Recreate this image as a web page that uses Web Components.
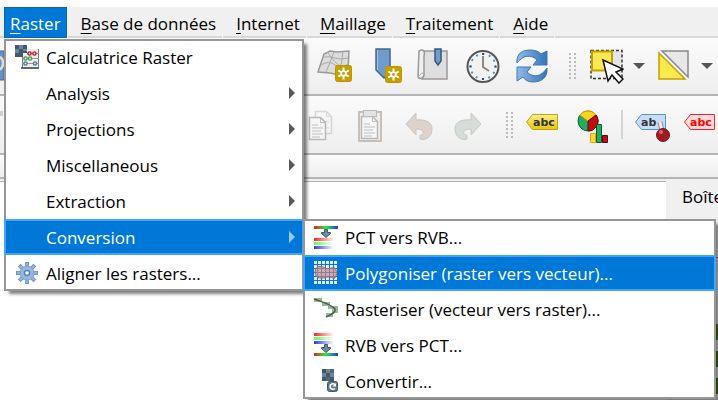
<!DOCTYPE html>
<html lang="fr">
<head>
<meta charset="utf-8">
<title>Raster</title>
<style>
    html, body {
        height: 100%;
        margin: 0;
    }
    body {
        overflow: hidden;
        background: #ffffff;
        color: #000000;
        font: 17px/24px "Open Sans", "Noto Sans", sans-serif;
    }
    u {
        text-decoration-thickness: 1px;
        text-underline-offset: 3px;
    }
</style>
</head>
<body>
<gis-window>
    <menu-bar slot="menu">
        <menu-entry active>
            <u>R</u>aster
            <popup-menu slot="popup">
                <menu-item icon="calculator">Calculatrice Raster</menu-item>
                <menu-item more>Analysis</menu-item>
                <menu-item more>Projections</menu-item>
                <menu-item more>Miscellaneous</menu-item>
                <menu-item more>Extraction</menu-item>
                <menu-item more active>
                    Conversion
                    <popup-menu slot="submenu" wide>
                        <menu-item icon="pct">PCT vers RVB...</menu-item>
                        <menu-item icon="polygonize" active>Polygoniser (raster vers vecteur)...</menu-item>
                        <menu-item icon="rasterize">Rasteriser (vecteur vers raster)...</menu-item>
                        <menu-item icon="rgb">RVB vers PCT...</menu-item>
                        <menu-item icon="convert">Convertir...</menu-item>
                    </popup-menu>
                </menu-item>
                <menu-item icon="gear">Aligner les rasters...</menu-item>
            </popup-menu>
        </menu-entry>
        <menu-entry><u>B</u>ase de données</menu-entry>
        <menu-entry><u>I</u>nternet</menu-entry>
        <menu-entry><u>M</u>aillage</menu-entry>
        <menu-entry><u>T</u>raitement</menu-entry>
        <menu-entry><u>A</u>ide</menu-entry>
    </menu-bar>

    <tool-bar slot="tools">
        <tool-group lead>
            <tool-button icon="zoomlayer" label="Zoom sur la couche"></tool-button>
        </tool-group>
        <tool-group>
            <tool-button icon="mesh" label="Nouvelle vue 3D"></tool-button>
            <tool-button icon="bookmark" label="Nouveau signet"></tool-button>
            <tool-button icon="map" label="Signets"></tool-button>
            <tool-button icon="clock" label="Contrôleur temporel"></tool-button>
            <tool-button icon="refresh" label="Actualiser"></tool-button>
        </tool-group>
        <tool-handle></tool-handle>
        <tool-group snug>
            <tool-button icon="select" label="Sélectionner" drop></tool-button>
            <tool-button icon="deselect" label="Désélectionner" drop></tool-button>
        </tool-group>
    </tool-bar>

    <tool-bar slot="tools" class="edit">
        <tool-group lead>
            <tool-button icon="stub" label="Enregistrer"></tool-button>
        </tool-group>
        <tool-group>
            <tool-button icon="copy" label="Copier"></tool-button>
            <tool-button icon="paste" label="Coller"></tool-button>
            <tool-button icon="undo" label="Annuler"></tool-button>
            <tool-button icon="redo" label="Rétablir"></tool-button>
        </tool-group>
        <tool-handle></tool-handle>
        <tool-group>
            <tool-button icon="label" label="Étiquettes"></tool-button>
            <tool-button icon="diagram" label="Diagrammes"></tool-button>
        </tool-group>
        <tool-handle line></tool-handle>
        <tool-group>
            <tool-button icon="pin" label="Épingler"></tool-button>
            <tool-button icon="labelred" label="Étiquettes non placées"></tool-button>
        </tool-group>
    </tool-bar>

    <tool-bar slot="tools" slim></tool-bar>

    <map-canvas></map-canvas>
    <dock-panel slot="dock">Boîte</dock-panel>
</gis-window>

<script>
const SPARK = `
    <rect x="0.5" y="0.5" width="16" height="16" rx="2" fill="#c4a000" stroke="#b89500"/>
    <path d="M8.500 2.500v12M3.300 5.500l10.400 6M3.300 11.500l10.400-6" stroke="#fff" stroke-width="2"/>
    <circle cx="8.500" cy="8.500" r="3.200" fill="#fff"/><circle cx="8.500" cy="8.500" r="1.400" fill="#c4a000"/>`;

const RAMPS = `
    <defs>
        <linearGradient id="all"><stop offset="0" stop-color="#e22"/><stop offset=".5" stop-color="#2e3"/><stop offset="1" stop-color="#23e"/></linearGradient>
        <linearGradient id="r"><stop offset="0" stop-color="#f22"/><stop offset="1" stop-color="#fff"/></linearGradient>
        <linearGradient id="g"><stop offset="0" stop-color="#5f5"/><stop offset="1" stop-color="#fff"/></linearGradient>
        <linearGradient id="b"><stop offset="0" stop-color="#33e"/><stop offset="1" stop-color="#fff"/></linearGradient>
    </defs>`;

const CHECKER = `
    <rect width="12" height="12" fill="#415a6b"/>
    <path d="M4 0h4v4H4zM0 4h4v4H0zM8 4h4v4H8z" fill="#6b8799"/>
    <path d="M8 0h4v4H8zM4 8h4v4H4z" fill="#52697a"/>`;

const PAGE = `
    <path d="M.5.500h11l5 5v17H.5z" fill="#f6f6f6" stroke="#b8b8b8" stroke-width="1.500"/>
    <path d="M11.500.500v5h5M3 8h6M3 11h11M3 14h9M3 17h11M3 20h8" fill="none" stroke="#bdbdbd"/>`;

// menu icons are drawn on a 24 grid, toolbar icons on a 36 grid
const ICONS = {
    calculator: `${CHECKER}
        <rect x="7" y="4" width="17" height="19" fill="#eee"/>
        <path d="M0 0h12v8H8v4H0z" fill="#415a6b"/>
        <path d="M4 0h4v4H4zM0 4h4v4H0zM8 4h4v2H8z" fill="#6b8799"/>
        <path d="M7.500 12v12M23.500 4v20" stroke="#777"/>
        <path d="M12 8.500h12M7 13.500h17M7 18.500h17" stroke="#999"/>
        <path d="M6 23h18" stroke="#666" stroke-width="2"/>
        <g fill="#eee" stroke-width="1.400">
            <g stroke="#c01020"><circle cx="14.500" cy="8.500" r="1.600"/><circle cx="19.500" cy="8.500" r="1.600"/></g>
            <g stroke="#4a9a4a"><circle cx="10.500" cy="13.500" r="1.600"/><circle cx="15" cy="13.500" r="1.600"/></g>
            <g stroke="#4d7599"><circle cx="10.500" cy="18.500" r="1.600"/><circle cx="20" cy="18.500" r="1.600"/></g>
        </g>`,
    gear: `
        <path d="M12 1v22M1 12h22M4.200 4.200l15.600 15.600M4.200 19.800L19.800 4.200" stroke="#6b94c8" stroke-width="4"/>
        <path d="M12 2v20M2 12h20M5 5l14 14M5 19L19 5" stroke="#98b5dc" stroke-width="2.400"/>
        <circle cx="12" cy="12" r="7" fill="#98b5dc" stroke="#7fa2d0"/>
        <circle cx="12" cy="12" r="2.500" fill="#fff" stroke="#5583bb" stroke-width="1.500"/>`,
    pct: `${RAMPS}
        <rect y="1" width="24" height="3" fill="url(#all)"/>
        <rect y="13" width="20" height="3" fill="url(#r)"/><rect y="17" width="20" height="3" fill="url(#g)"/><rect y="21" width="20" height="3" fill="url(#b)"/>
        <path d="M10.500 4.500h3v3h3v1L12 12.500 7.500 8.500v-1h3z" fill="#6d8ca1" stroke="#3f5666"/>`,
    rgb: `${RAMPS}
        <rect width="20" height="3" fill="url(#r)"/><rect y="4" width="20" height="3" fill="url(#g)"/><rect y="8" width="20" height="3" fill="url(#b)"/>
        <rect y="20" width="24" height="3" fill="url(#all)"/>
        <path d="M10.500 11.500h3v3h3v1L12 19.500l-4.500-4v-1h3z" fill="#6d8ca1" stroke="#3f5666"/>`,
    polygonize: `
        <path d="M0 1.500h23M0 5.500h23M0 9.500h23M0 13.500h23M0 17.500h23M0 21.500h23" stroke="#e4ecf5" stroke-width="3" stroke-dasharray="3 1"/>
        <path d="M1 11c0-6 6-7 10-4 3 2 6-1 10 0 2 3 2 8 0 10-3 1-4-2-8-1-5 2-12 2-12-5z" fill="#c98580" fill-opacity=".65" stroke="#a8696f"/>`,
    rasterize: `
        <path d="M0 1h8v4h8v4h8v7h-5v4h-7v-4h6v-4h-4V9H8V5H0z" fill="#8fbd8f"/>
        <path d="M0 2c8 3 17 5 21 10 1 3-2 5-9 8" fill="none" stroke="#555" stroke-width="1.400"/>`,
    convert: `<g transform="translate(8 0)">${CHECKER}</g>
        <rect x="13.500" y="12.500" width="10" height="10" rx="2" fill="#5f7787" stroke="#415a6b"/>
        <path d="M21 15.500c-2-1.500-5-.5-5 2s3 3.500 5 2" fill="none" stroke="#fff" stroke-width="1.500"/>
        <path d="M22 14v3.500h-3.500z" fill="#fff"/>`,

    zoomlayer: `<rect x="-4" y="3" width="8" height="29" fill="#6691c6" stroke="#3e6697"/>
        <path d="M-2 9q5 0 5 6t-5 7" fill="none" stroke="#ddd" stroke-width="2.500"/>`,
    stub: `<path d="M0 4h3v5H0z" fill="#d0d0d0"/>`,
    mesh: `
        <path d="M1 24L7 6l6-3 7 1 12-1-1 20-9 4-9-2z" fill="#dcdcdc" stroke="#999" stroke-width="1.500"/>
        <path d="M4 17q8-5 14 0t14-2M7 9q6-1 11 1t13 0M9 24q5-12 8-20M20 26q6-11 6-22M10 4q7 10 18 19" fill="none" stroke="#aaa"/>
        <g transform="translate(18 17)">${SPARK}</g>`,
    bookmark: `
        <path d="M10 1h14v24l-6 5-8-8z" fill="#6f9bcd" stroke="#44688f" stroke-width="1.500"/>
        <path d="M11.500 2v20" stroke="#a9c5e6"/>
        <g transform="translate(19 18)">${SPARK}</g>`,
    map: `
        <path d="M7 3h25v28H7z" fill="#dedede" stroke="#999" stroke-width="1.500"/>
        <path d="M4 3c5-3 6 1 5 5v19c-1 5-6 4-6 1z" fill="#efefef" stroke="#999" stroke-width="1.500"/>
        <path d="M4 28q2-4 6-3" fill="none" stroke="#aaa"/>
        <path d="M20 1h6v12l-3 4-3-4z" fill="#6f9bcd" stroke="#35597f" stroke-width="1.500"/>`,
    clock: `
        <circle cx="19" cy="18.500" r="15.500" fill="#f2f2ee" stroke="#555" stroke-width="2"/>
        <circle cx="19" cy="18.500" r="12.500" fill="none" stroke="#5590d0" stroke-width="2" stroke-dasharray="2 4.545" stroke-dashoffset="1"/>
        <path d="M19 5v2M19 30v2M5.500 18.500h2M30.500 18.500h2" stroke="#2d4f78" stroke-width="2"/>
        <path d="M19 8v11l6 4" fill="none" stroke="#888a85" stroke-width="2"/>`,
    refresh: `
        <defs><linearGradient id="f"><stop offset="0" stop-color="#92b9e6"/><stop offset="1" stop-color="#3673b8"/></linearGradient></defs>
        <g transform="translate(0 1)">
            <path d="M4 14C3 5 9 1 17 1c5 0 8 1 11 4l6-3v14H20l4-5c-6-6-14-5-20 3z" fill="url(#f)" stroke="#3f78b8"/>
            <path d="M34 19c1 9-5 14-14 14-5 0-8-2-10-5l-6 4V18h14l-4 5c6 6 14 5 20-4z" fill="url(#f)" stroke="#3f78b8"/>
        </g>`,
    select: `
        <path d="M20 3h14v27z" fill="#e2e5ea"/>
        <rect x="3" y="2.500" width="31" height="28" fill="none" stroke="#333" stroke-width="1.500" stroke-dasharray="3 2"/>
        <rect x="4" y="3.500" width="20" height="19" fill="#fce94f" stroke="#c4a000" stroke-width="2"/>
        <path d="M15 12l20 9-7 3 7 7-4 4-7-8-4 6z" fill="#fff" stroke="#111" stroke-width="1.500"/>`,
    deselect: `
        <path d="M6 3h26v26z" fill="#e8e8e8" stroke="#888" stroke-width="1.500"/>
        <path d="M3 5v26h26z" fill="#fce94f" stroke="#c4a000" stroke-width="1.500"/>`,
    copy: `
        <g transform="translate(12 4)" opacity=".5">${PAGE}</g>
        <g transform="translate(6 10)">${PAGE}</g>`,
    paste: `
        <rect x="7" y="5" width="22" height="29" fill="#eee" stroke="#c8bfb7" stroke-width="2"/>
        <g transform="translate(9 9)">${PAGE}</g>
        <rect x="11.500" y="3.500" width="13" height="6" fill="#e3e3e3" stroke="#bbb"/>`,
    undo: `<path d="M5 17L15 6v7c11-1 16 3 16 9 0 8-7 12-12 10v-4c4 1 6-6-4-6v6z" fill="#dcd3cd" stroke="#cdc4be"/>`,
    redo: `<path d="M31 17L21 6v7C10 12 5 16 5 22c0 8 7 12 12 10v-4c-4 1-6-6 4-6v6z" fill="#d8dcd8" stroke="#c4cac4"/>`,
    label: `
        <defs><linearGradient id="y" x2="0" y2="1"><stop offset="0" stop-color="#f8ef8c"/><stop offset="1" stop-color="#e8c800"/></linearGradient></defs>
        <path d="M1.500 15l6-7.500h25v15h-25z" fill="url(#y)" stroke="#bfa21a"/>
        <text x="8" y="19" font-family="DejaVu Sans" font-weight="700" font-size="11" fill="#333">abc</text>`,
    labelred: `
        <path d="M1.500 15l6-7.500h24v15h-24z" fill="#ffdcdc" stroke="#ff2020"/>
        <text x="7" y="19" font-family="DejaVu Sans" font-weight="700" font-size="11" fill="#ff0000">abc</text>`,
    diagram: `
        <circle cx="14" cy="14" r="10" fill="#1faf60" stroke="#14552f"/>
        <path d="M14 14L6 8a10 10 0 0 1 16 0z" fill="#fcd21c" stroke="#e59a10"/>
        <path d="M14 14l8-6a10 10 0 0 1-8 16z" fill="#c00d0d" stroke="#5b0b0b"/>
        <path d="M16.500 26.500h5v9h-5z" fill="#ffd93b" stroke="#f0a000"/>
        <path d="M22.500 17.500h5v18h-5z" fill="#1faf60" stroke="#14552f"/>
        <path d="M28.500 28.500h5v7h-5z" fill="#c00d0d" stroke="#5b0b0b"/>`,
    pin: `
        <path d="M1.500 15l6-7.500h24v15h-24z" fill="#c9dcf3" stroke="#4f94e8"/>
        <text x="7" y="19" font-family="DejaVu Sans" font-weight="700" font-size="11" fill="#333">ab</text>
        <path d="M26 15c1 5 2 6 2 12" fill="none" stroke="#888" stroke-width="5"/>
        <path d="M26 15c1 5 2 6 2 12" fill="none" stroke="#eee" stroke-width="3"/>
        <circle cx="29" cy="28" r="6.500" fill="#9f1d20" stroke="#7b1518"/><circle cx="27" cy="25" r="2" fill="#cf6a6c"/>`
};

class BaseElement extends HTMLElement {
    constructor() {
        super();
        this.attachShadow({ mode: 'open' });
    }
    connectedCallback() {
        this.shadowRoot.innerHTML = this.initHtml();
    }
}

class GisWindow extends BaseElement {
    initHtml() {
        return `
        <style>
        :host {
            height: 100%;
            box-sizing: border-box;
            padding-top: 7px;
            display: flex;
            flex-direction: column;
        }
        main {
            flex: 1;
            min-height: 0;
            display: grid;
            grid-template-columns: 1fr 52px;
            padding-top: 2px;
            background: #f0f0f0;
        }
        </style>
        <slot name="menu"></slot>
        <slot name="tools"></slot>
        <main><slot></slot><slot name="dock"></slot></main>
        `;
    }
}

class MenuBar extends BaseElement {
    initHtml() {
        return `
        <style>
        :host {
            display: flex;
            flex: none;
            gap: 8px;
            height: 31px;
            padding-left: 4px;
            background: #f0f0f0;
            box-shadow: inset 0 -2px #d8d8d8;
            position: relative;
            z-index: 10;
        }
        </style>
        <slot></slot>
        `;
    }
}

class MenuEntry extends BaseElement {
    initHtml() {
        return `
        <style>
        :host {
            display: flex;
            position: relative;
            white-space: nowrap;
        }
        :host::after {
            content: "";
            position: absolute;
            right: -1px;
            bottom: 0;
            width: 1px;
            height: 2px;
            background: #f8f8f8;
        }
        button {
            font: inherit;
            color: inherit;
            background: none;
            border: 1px solid transparent;
            padding: 4px 5px 2px;
        }
        :host([active]) button {
            color: #ffffff;
            background: #0078d7;
            border-color: #0a64b4;
        }
        ::slotted(popup-menu) {
            position: absolute;
            left: 0;
            top: 32px;
        }
        </style>
        <button type="button"><slot></slot></button>
        <slot name="popup"></slot>
        `;
    }
}

class PopupMenu extends BaseElement {
    initHtml() {
        return `
        <style>
        :host {
            display: flex;
            flex-direction: column;
            min-width: 300px;
            color: #000000;
            background: #ffffff;
            box-shadow: inset 0 0 0 2px #969696, 4px 4px 3px -1px rgba(0, 0, 0, .5);
        }
        :host([wide]) {
            min-width: 413px;
        }
        </style>
        <slot></slot>
        `;
    }
}

class MenuItem extends BaseElement {
    initHtml() {
        const icon = ICONS[this.getAttribute('icon')] || '';
        return `
        <style>
        :host {
            display: block;
            position: relative;
            white-space: nowrap;
        }
        button {
            display: grid;
            grid-template-columns: 24px 1fr 6px;
            column-gap: 7px;
            align-items: center;
            width: 100%;
            height: 36px;
            padding: 0 7px 0 9px;
            border: 2px solid transparent;
            background: none;
            color: inherit;
            font: inherit;
            text-align: left;
        }
        span {
            padding-top: 2px;
        }
        :host([active]) button {
            color: #ffffff;
            background: #0078d7;
            border-color: #42a5f5;
        }
        .arrow {
            width: 6px;
            height: 12px;
            background: #5a5a5a;
            clip-path: polygon(0 0, 100% 50%, 0 100%);
        }
        :host([active]) .arrow {
            background: #99c9ef;
        }
        ::slotted(popup-menu) {
            position: absolute;
            left: calc(100% - 1px);
            top: 0;
        }
        </style>
        <button type="button">
            <svg width="24" height="24" fill="none">${icon}</svg>
            <span><slot></slot></span>
            ${this.hasAttribute('more') ? '<i class="arrow"></i>' : ''}
        </button>
        <slot name="submenu"></slot>
        `;
    }
}

class ToolBar extends BaseElement {
    initHtml() {
        return `
        <style>
        :host {
            display: flex;
            flex: none;
            align-items: center;
            height: 56px;
            overflow: hidden;
            background: linear-gradient(#fbfbfb, #eeeeee);
            border-bottom: 2px solid #b4b4b4;
            --lead: 317px;
        }
        :host(.edit) {
            height: 57px;
            --lead: 303px;
        }
        :host([slim]) {
            height: 22px;
        }
        </style>
        <slot></slot>
        `;
    }
}

class ToolGroup extends BaseElement {
    initHtml() {
        return `
        <style>
        :host {
            display: flex;
            flex: none;
            gap: 13px;
        }
        :host([lead]) {
            width: var(--lead);
        }
        :host([snug]) {
            gap: 11px;
        }
        </style>
        <slot></slot>
        `;
    }
}

class ToolHandle extends BaseElement {
    initHtml() {
        return `
        <style>
        :host {
            flex: none;
            width: 7px;
            height: 26px;
            margin: 0 12px 0 20px;
            background: conic-gradient(transparent 75%, #bbbbbb 0) 0 0 / 5px 4px;
        }
        :host([line]) {
            width: 2px;
            height: 29px;
            margin: 0 11px;
            background: #d4d4d4;
        }
        </style>
        `;
    }
}

class ToolButton extends BaseElement {
    initHtml() {
        const drop = this.hasAttribute('drop');
        return `
        <style>
        :host {
            display: block;
        }
        button {
            display: flex;
            align-items: center;
            gap: 9px;
            padding: 0;
            border: 0;
            background: none;
        }
        .drop {
            width: 12px;
            height: 6px;
            background: #555555;
            clip-path: polygon(0 0, 100% 0, 50% 100%);
        }
        </style>
        <button type="button" aria-label="${this.getAttribute('label')}">
            <svg width="36" height="36">${ICONS[this.getAttribute('icon')]}</svg>
            ${drop ? '<i class="drop"></i>' : ''}
        </button>
        `;
    }
}

class MapCanvas extends BaseElement {
    initHtml() {
        return `
        <style>
        :host {
            background: #ffffff;
            border-top: 1px solid #b4b4b4;
        }
        </style>
        `;
    }
}

class DockPanel extends BaseElement {
    initHtml() {
        return `
        <style>
        :host {
            display: flex;
            flex-direction: column;
            overflow: hidden;
            padding-left: 16px;
            background: #f0f0f0;
        }
        header {
            padding: 4px 0 48px;
        }
        .tree {
            display: grid;
            gap: 11px;
            justify-items: end;
            padding-top: 66px;
            border-top: 1px solid #999999;
        }
        i {
            width: 2px;
            height: 16px;
            background: #4d7a12;
        }
        </style>
        <header><slot></slot></header>
        <div class="tree"><i></i><i></i><i></i></div>
        `;
    }
}

customElements.define('gis-window', GisWindow);
customElements.define('menu-bar', MenuBar);
customElements.define('menu-entry', MenuEntry);
customElements.define('popup-menu', PopupMenu);
customElements.define('menu-item', MenuItem);
customElements.define('tool-bar', ToolBar);
customElements.define('tool-group', ToolGroup);
customElements.define('tool-handle', ToolHandle);
customElements.define('tool-button', ToolButton);
customElements.define('map-canvas', MapCanvas);
customElements.define('dock-panel', DockPanel);
</script>
</body>
</html>
